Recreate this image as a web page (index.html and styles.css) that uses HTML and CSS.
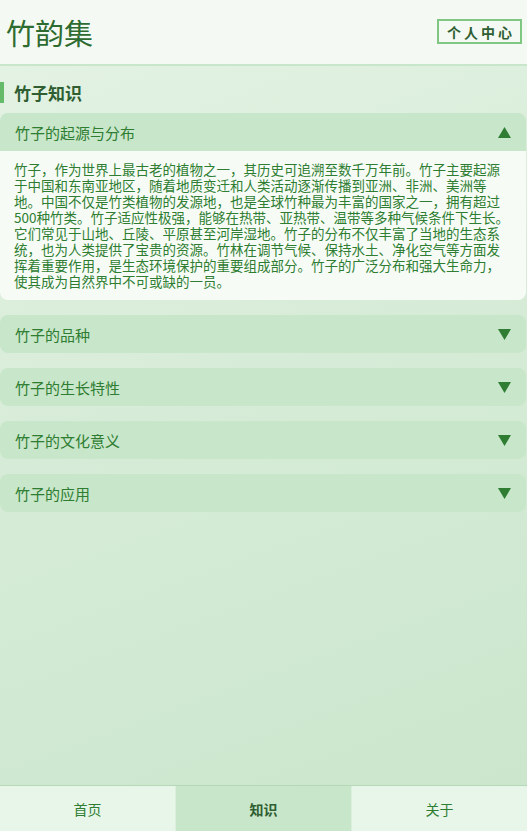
FILE: index.html
```html
<!DOCTYPE html>
<html lang="zh-CN">
<head>
<meta charset="utf-8">
<title>竹韵集</title>
<link rel="stylesheet" href="styles.css">
</head>
<body>
<div class="app">
  <header class="topbar">
    <h1 class="logo">竹韵集</h1>
    <button class="user-btn">个人中心</button>
  </header>
  <main class="main">
    <h2 class="section-title">竹子知识</h2>
    <div class="accordion">
      <div class="item open">
        <div class="item-head"><span>竹子的起源与分布</span><svg class="arrow" viewBox="0 0 13 11" width="13" height="11"><polygon points="6.5,0 13,11 0,11"/></svg></div>
        <div class="item-body">竹子，作为世界上最古老的植物之一，其历史可追溯至数千万年前。竹子主要起源于中国和东南亚地区，随着地质变迁和人类活动逐渐传播到亚洲、非洲、美洲等地。中国不仅是竹类植物的发源地，也是全球竹种最为丰富的国家之一，拥有超过500种竹类。竹子适应性极强，能够在热带、亚热带、温带等多种气候条件下生长。它们常见于山地、丘陵、平原甚至河岸湿地。竹子的分布不仅丰富了当地的生态系统，也为人类提供了宝贵的资源。竹林在调节气候、保持水土、净化空气等方面发挥着重要作用，是生态环境保护的重要组成部分。竹子的广泛分布和强大生命力，使其成为自然界中不可或缺的一员。</div>
      </div>
      <div class="item">
        <div class="item-head"><span>竹子的品种</span><svg class="arrow" viewBox="0 0 13 11" width="13" height="11"><polygon points="0,0 13,0 6.5,11"/></svg></div>
      </div>
      <div class="item">
        <div class="item-head"><span>竹子的生长特性</span><svg class="arrow" viewBox="0 0 13 11" width="13" height="11"><polygon points="0,0 13,0 6.5,11"/></svg></div>
      </div>
      <div class="item">
        <div class="item-head"><span>竹子的文化意义</span><svg class="arrow" viewBox="0 0 13 11" width="13" height="11"><polygon points="0,0 13,0 6.5,11"/></svg></div>
      </div>
      <div class="item">
        <div class="item-head"><span>竹子的应用</span><svg class="arrow" viewBox="0 0 13 11" width="13" height="11"><polygon points="0,0 13,0 6.5,11"/></svg></div>
      </div>
    </div>
  </main>
  <nav class="tabbar">
    <a class="tab">首页</a>
    <a class="tab active">知识</a>
    <a class="tab">关于</a>
  </nav>
</div>
</body>
</html>
```
FILE: styles.css
```css
html, body {
  margin: 0;
  padding: 0;
  height: 100%;
}
body {
  font-family: "Noto Sans CJK SC", "Noto Sans", sans-serif;
  color: #2e7d32;
}
.app {
  display: flex;
  flex-direction: column;
  height: 100vh;
}
.topbar {
  display: flex;
  align-items: center;
  justify-content: space-between;
  height: 64px;
  padding: 0 5px 0 6px;
  background: #f4faf3;
  border-bottom: 2px solid #c8e6c9;
  box-sizing: content-box;
}
.logo {
  margin: 0;
  font-family: "Noto Sans CJK SC", serif;
  font-size: 29px;
  font-weight: normal;
  color: #2e6b30;
}
.user-btn {
  font-family: "Noto Sans CJK SC", sans-serif;
  font-size: 14px;
  font-weight: bold;
  letter-spacing: 3px;
  color: #2e5e31;
  background: transparent;
  border: 2px solid #81c784;
  padding: 0 2px 0 5px;
  height: 25px;
  width: 85px;
  margin-bottom: 1px;
}
.main {
  flex: 1;
  background: linear-gradient(160deg, #e3f2e3 0%, #d5ebd6 50%, #cbe6cd 100%);
  padding: 16px 1px 0 0;
}
.section-title {
  margin: 0 0 10px 0;
  border-left: 4px solid #66bb6a;
  padding-left: 10px;
  height: 21px;
  line-height: 21px;
  font-size: 17px;
  font-weight: bold;
  color: #2e5e31;
}
.accordion {
  display: flex;
  flex-direction: column;
  gap: 15px;
}
.item {
  border-radius: 8px;
  overflow: hidden;
}
.item-head {
  display: flex;
  align-items: center;
  justify-content: space-between;
  height: 38px;
  padding: 0 15px;
  background: #c8e6c9;
  font-size: 15px;
  color: #2e7d32;
}
.arrow {
  fill: #2e7d32;
}
.item-body {
  background: #f6fcf5;
  padding: 10px 17px 11px 14px;
  font-size: 13.5px;
  line-height: 16px;
  color: #2e7d32;
}
.tabbar {
  display: flex;
  border-top: 1px solid #b5d8b6;
  height: 45px;
}
.tab {
  flex: 1;
  display: flex;
  align-items: center;
  justify-content: center;
  background: #e8f5e9;
  font-size: 14px;
  color: #2e7d32;
}
.tab.active {
  background: #c8e6c9;
  font-weight: bold;
  color: #2e5e31;
  border-left: 1px solid #dcefdc;
  border-right: 1px solid #dcefdc;
}
```
